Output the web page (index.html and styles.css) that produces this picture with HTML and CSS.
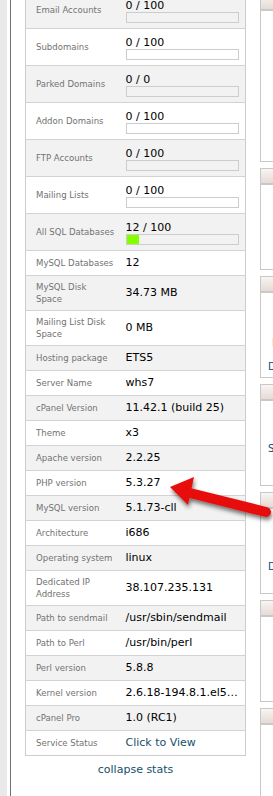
FILE: index.html
```html
<!DOCTYPE html>
<html lang="en">
<head>
  <meta charset="UTF-8" />
  <meta name="viewport" content="width=device-width, initial-scale=1" />
  <title>Stats</title>
  <link rel="stylesheet" href="styles.css">
</head>
<body>
  <div class="page">
    <div class="gutter"></div>
    <div class="rule"></div>

    <div class="main">
      <table class="stats">
        <colgroup><col class="col-label"><col class="col-value"></colgroup>
        <tr class="bar-row odd"><td class="label">Email Accounts</td><td class="value"><div class="count">0 / 100</div><div class="bar"></div></td></tr>
        <tr class="bar-row"><td class="label">Subdomains</td><td class="value"><div class="count">0 / 100</div><div class="bar"></div></td></tr>
        <tr class="bar-row odd"><td class="label">Parked Domains</td><td class="value"><div class="count">0 / 0</div><div class="bar"></div></td></tr>
        <tr class="bar-row"><td class="label">Addon Domains</td><td class="value"><div class="count">0 / 100</div><div class="bar"></div></td></tr>
        <tr class="bar-row odd"><td class="label">FTP Accounts</td><td class="value"><div class="count">0 / 100</div><div class="bar"></div></td></tr>
        <tr class="bar-row"><td class="label">Mailing Lists</td><td class="value"><div class="count">0 / 100</div><div class="bar"></div></td></tr>
        <tr class="bar-row odd"><td class="label">All SQL Databases</td><td class="value"><div class="count">12 / 100</div><div class="bar"><div class="fill" style="width: 11%"></div></div></td></tr>
        <tr><td class="label">MySQL Databases</td><td class="value">12</td></tr>
        <tr class="odd"><td class="label">MySQL Disk<br>Space</td><td class="value">34.73 MB</td></tr>
        <tr><td class="label">Mailing List Disk<br>Space</td><td class="value">0 MB</td></tr>
        <tr class="odd"><td class="label">Hosting package</td><td class="value">ETS5</td></tr>
        <tr><td class="label">Server Name</td><td class="value">whs7</td></tr>
        <tr class="odd"><td class="label">cPanel Version</td><td class="value">11.42.1 (build 25)</td></tr>
        <tr><td class="label">Theme</td><td class="value">x3</td></tr>
        <tr class="odd"><td class="label">Apache version</td><td class="value">2.2.25</td></tr>
        <tr><td class="label">PHP version</td><td class="value">5.3.27</td></tr>
        <tr class="odd"><td class="label">MySQL version</td><td class="value">5.1.73-cll</td></tr>
        <tr><td class="label">Architecture</td><td class="value">i686</td></tr>
        <tr class="odd"><td class="label">Operating system</td><td class="value">linux</td></tr>
        <tr><td class="label">Dedicated IP<br>Address</td><td class="value">38.107.235.131</td></tr>
        <tr class="odd"><td class="label">Path to sendmail</td><td class="value">/usr/sbin/sendmail</td></tr>
        <tr><td class="label">Path to Perl</td><td class="value">/usr/bin/perl</td></tr>
        <tr class="odd"><td class="label">Perl version</td><td class="value">5.8.8</td></tr>
        <tr><td class="label">Kernel version</td><td class="value">2.6.18-194.8.1.el5…</td></tr>
        <tr class="odd"><td class="label">cPanel Pro</td><td class="value">1.0 (RC1)</td></tr>
        <tr><td class="label">Service Status</td><td class="value"><a class="link" href="#">Click to View</a></td></tr>
      </table>
      <div class="collapse"><a class="link" href="#">collapse stats</a></div>
    </div>

    <div class="side">
      <div class="panel first"><div class="panel-head"></div></div>
      <div class="panel"><div class="panel-head"></div></div>
      <div class="panel">
        <div class="panel-head"></div>
        <div class="panel-body">
          <div class="brown">Info</div>
          <div class="blue">Domains</div>
        </div>
      </div>
      <div class="panel">
        <div class="panel-head"></div>
        <div class="panel-body"><div class="blue s-line">Security</div></div>
      </div>
      <div class="panel">
        <div class="panel-head"></div>
        <div class="panel-body"><div class="blue d-line">Databases</div></div>
      </div>
      <div class="panel"><div class="panel-head"></div></div>
      <div class="panel last"><div class="panel-head"></div></div>
    </div>

    <svg class="arrow" width="273" height="796" viewBox="0 0 273 796">
      <defs>
        <filter id="shadow" x="-20%" y="-50%" width="140%" height="200%">
          <feDropShadow dx="1" dy="3" stdDeviation="2" flood-color="#000" flood-opacity="0.55"/>
        </filter>
      </defs>
      <g filter="url(#shadow)">
        <line x1="186" y1="492" x2="266" y2="512" stroke="#e8100c" stroke-width="10" stroke-linecap="round"/>
        <polygon points="170,487 194,477 188,505" fill="#e8100c"/>
      </g>
    </svg>
  </div>
</body>
</html>
```

FILE: styles.css
```css
html, body {
  margin: 0;
  background: #fff;
}

.page {
  position: relative;
  display: flex;
  align-items: flex-start;
  height: 796px;
  overflow: hidden;
}

.gutter {
  width: 7px;
  height: 100%;
  background: #e9e9e9;
  flex-shrink: 0;
}

.rule {
  width: 1px;
  height: 100%;
  margin-left: 3px;
  background: #707070;
  flex-shrink: 0;
}

.main {
  width: 221px;
  margin-left: 14px;
  margin-top: -9px;
  flex-shrink: 0;
}

.stats {
  width: 221px;
  border-collapse: collapse;
  table-layout: fixed;
  border: 1px solid #cccccc;
}

.col-label { width: 94px; }

.stats td {
  border-top: 1px solid #d2d2d2;
  padding: 5px 4px 5px 6px;
  vertical-align: middle;
}

.stats tr.odd td { background: #f2f2f2; }

.stats td.label {
  padding-left: 10px;
  font-family: "DejaVu Sans Condensed", "DejaVu Sans", sans-serif;
  font-size: 9.5px;
  line-height: 12px;
  color: #727272;
  white-space: nowrap;
}

.stats td.value {
  font-family: "DejaVu Sans", Verdana, sans-serif;
  font-size: 11px;
  line-height: 14px;
  color: #000;
  white-space: nowrap;
  overflow: hidden;
}

.stats tr.bar-row td.value {
  padding-top: 7px;
  padding-bottom: 5px;
  padding-right: 6px;
}

.count { line-height: 13px; }

.bar {
  height: 9px;
  border: 1px solid #cccccc;
}

.fill {
  height: 100%;
  background: #84ff00;
}

.link {
  color: #17506b;
  text-decoration: none;
}

.collapse {
  margin-top: 7px;
  text-align: center;
  font-family: "DejaVu Sans", Verdana, sans-serif;
  font-size: 11px;
  line-height: 14px;
}

.side {
  margin-left: 14px;
  margin-top: -6px;
  display: flex;
  flex-direction: column;
  gap: 6px;
  width: 120px;
  flex-shrink: 0;
}

.panel {
  height: 100px;
  border: 1px solid #c8c8c8;
  background: #fff;
}

.panel.first { height: 166px; }
.panel.last { height: 120px; }

.panel-head {
  height: 14px;
  background: linear-gradient(#f8f5f3, #e6dad4);
  border-bottom: 2px solid #c9c9c9;
}

.panel-body {
  padding: 44px 0 0 7px;
  font-family: "DejaVu Sans", Verdana, sans-serif;
  font-size: 10px;
  line-height: 12px;
}

.brown {
  color: #8a5a4c;
  padding-left: 4px;
}

.blue {
  margin-top: 12px;
  color: #0b4d79;
}

.blue.s-line { margin-top: -2px; }
.blue.d-line { margin-top: 8px; }

.arrow {
  position: absolute;
  left: 0;
  top: 0;
  pointer-events: none;
}
```
